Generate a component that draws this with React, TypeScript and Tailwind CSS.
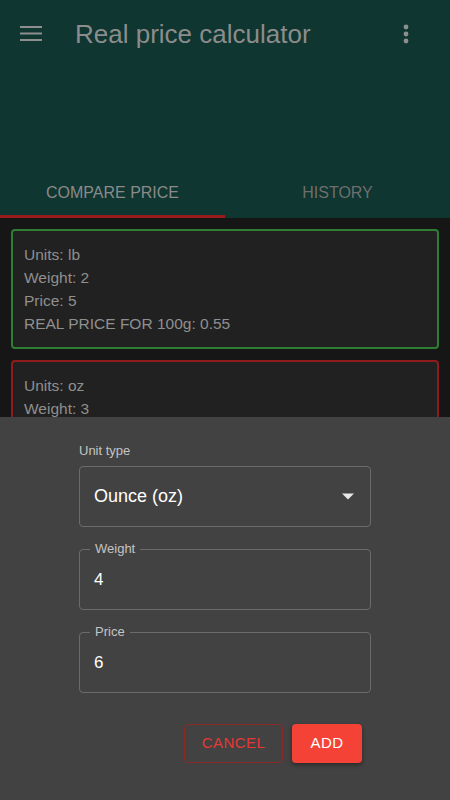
type Entry = {
  id: string;
  units: string;
  weight: string;
  price: string;
  real?: string;
  best: boolean;
};

const ENTRIES: Entry[] = [
  { id: "a", units: "lb", weight: "2", price: "5", real: "0.55", best: true },
  { id: "b", units: "oz", weight: "3", price: "4", best: false },
];

function Field({ label, value }: { label: string; value: string }) {
  return (
    <div className="relative h-[61px] rounded border border-[#6b6b6b]">
      <span className="absolute -top-[9px] left-[10px] bg-[#424242] px-[5px] text-[13px] leading-[16px] text-[#c4c4c4]">
        {label}
      </span>
      <div className="flex h-full items-center px-[14px] text-[17px] text-white">{value}</div>
    </div>
  );
}

export default function App() {
  return (
    <div className="relative h-[800px] w-[450px] overflow-hidden bg-[#161616] font-['Liberation_Sans','Arial',sans-serif]">
      {/* dimmed page behind the sheet */}
      <header className="bg-[#0f3630]">
        <div className="flex h-[67px] items-center pl-[20px] pr-[41px]">
          <svg width="22" height="15" viewBox="0 0 22 15">
            <path d="M0 1h22M0 7.5h22M0 14h22" stroke="#8e8e8e" strokeWidth="2.2" />
          </svg>
          <h1 className="ml-[33px] flex-1 text-[26px] leading-none text-[#8c8c8c]">Real price calculator</h1>
          <svg width="6" height="20" viewBox="0 0 6 20">
            <circle cx="3" cy="3" r="2.4" fill="#8e8e8e" />
            <circle cx="3" cy="10" r="2.4" fill="#8e8e8e" />
            <circle cx="3" cy="17" r="2.4" fill="#8e8e8e" />
          </svg>
        </div>
        <div className="h-[103px]" />
        <nav className="grid grid-cols-2">
          <div className="flex h-[48px] items-center justify-center border-b-[3px] border-[#9a1b1b] text-[16px] text-[#8a8a8a]">
            COMPARE PRICE
          </div>
          <div className="flex h-[48px] items-center justify-center border-b-[3px] border-transparent text-[16px] text-[#6e6e6e]">
            HISTORY
          </div>
        </nav>
      </header>

      <section className="flex flex-col gap-[11px] px-[11px] pt-[11px]">
        {ENTRIES.map((e) => (
          <div
            key={e.id}
            className={`rounded-[4px] border-2 bg-[#212121] px-[11px] py-[12px] text-[15.5px] leading-[23px] text-[#8f8f8f] ${
              e.best ? "border-[#2f7d32]" : "border-[#8e1c1c]"
            }`}
          >
            <div>Units: {e.units}</div>
            <div>Weight: {e.weight}</div>
            <div>Price: {e.price}</div>
            {e.real && <div>REAL PRICE FOR 100g: {e.real}</div>}
          </div>
        ))}
      </section>

      {/* bottom sheet */}
      <div className="absolute inset-x-0 bottom-0 top-[417px] bg-[#424242]">
        <div className="mx-auto flex w-[292px] flex-col pt-[26px]">
          <label className="text-[13px] leading-[16px] text-[#c4c4c4]">Unit type</label>
          <div className="mt-[7px] flex h-[61px] items-center justify-between rounded border border-[#6b6b6b] pl-[14px] pr-[14px]">
            <span className="text-[18px] text-white">Ounce (oz)</span>
            <svg width="12" height="7" viewBox="0 0 10 5" className="mr-[2px]">
              <path d="M0 0l5 5 5-5z" fill="#e8e8e8" />
            </svg>
          </div>
          <div className="mt-[22px]">
            <Field label="Weight" value="4" />
          </div>
          <div className="mt-[22px]">
            <Field label="Price" value="6" />
          </div>
          <div className="mt-[31px] flex justify-end gap-[9px] pr-[9px]">
            <button
              type="button"
              className="h-[39px] w-[99px] rounded-[4px] border border-[#8a2a27] text-[15px] tracking-[0.03em] text-[#e53935]"
            >
              CANCEL
            </button>
            <button
              type="button"
              className="h-[39px] w-[70px] rounded-[4px] bg-[#f44336] text-[15px] tracking-[0.03em] text-white shadow-[0_2px_4px_rgba(0,0,0,0.4)]"
            >
              ADD
            </button>
          </div>
        </div>
      </div>
    </div>
  );
}
